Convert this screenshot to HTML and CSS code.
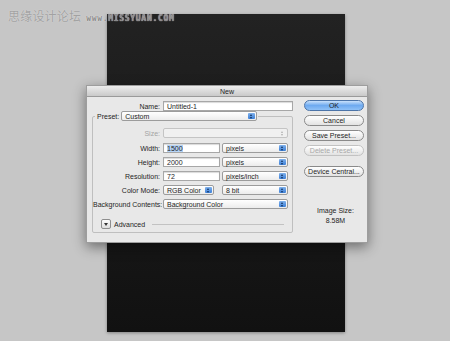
FILE: index.html
```html
<!DOCTYPE html>
<html lang="en">
<head>
    <meta charset="UTF-8">
    <title>New</title>
    <link rel="stylesheet" href="styles.css">
</head>
<body>
    <div class="stage">
        <div class="canvas"></div>

        <div class="watermark">
            <span class="wm-cn">思缘设计论坛</span>
            <span class="wm-url">www.MISSYUAN.COM</span>
        </div>

        <div class="dialog">
            <div class="titlebar">New</div>
            <div class="dialog-body">
                <div class="form">
                    <div class="row name-row">
                        <label class="lbl">Name:</label>
                        <div class="field input name-input">Untitled-1</div>
                    </div>

                    <div class="group">
                        <div class="group-head">
                            <span class="lbl-inline">Preset:</span>
                            <div class="field select preset">Custom<span class="arrows blue"></span></div>
                        </div>

                        <div class="row">
                            <label class="lbl disabled">Size:</label>
                            <div class="field select wide off"><span class="arrows grey"></span></div>
                        </div>
                        <div class="row gap-top">
                            <label class="lbl">Width:</label>
                            <div class="field input num"><span class="sel">1500</span></div>
                            <div class="field select unit">pixels<span class="arrows blue"></span></div>
                        </div>
                        <div class="row">
                            <label class="lbl">Height:</label>
                            <div class="field input num">2000</div>
                            <div class="field select unit">pixels<span class="arrows blue"></span></div>
                        </div>
                        <div class="row">
                            <label class="lbl">Resolution:</label>
                            <div class="field input num">72</div>
                            <div class="field select unit">pixels/inch<span class="arrows blue"></span></div>
                        </div>
                        <div class="row">
                            <label class="lbl">Color Mode:</label>
                            <div class="field select mode">RGB Color<span class="arrows blue"></span></div>
                            <div class="field select unit">8 bit<span class="arrows blue"></span></div>
                        </div>
                        <div class="row">
                            <label class="lbl">Background Contents:</label>
                            <div class="field select wide">Background Color<span class="arrows blue"></span></div>
                        </div>

                        <div class="advanced">
                            <span class="disclosure"></span>
                            <span>Advanced</span>
                            <span class="rule"></span>
                        </div>
                    </div>
                </div>

                <div class="side">
                    <button class="btn ok">OK</button>
                    <button class="btn">Cancel</button>
                    <button class="btn">Save Preset...</button>
                    <button class="btn off">Delete Preset...</button>
                    <button class="btn spaced">Device Central...</button>
                    <div class="size-info">
                        <div>Image Size:</div>
                        <div>8.58M</div>
                    </div>
                </div>
            </div>
        </div>
    </div>
</body>
</html>
```

FILE: styles.css
```css
* { box-sizing: border-box; }

body {
    margin: 0;
    background: #c6c6c6;
    font-family: "Liberation Sans", "Noto Sans CJK SC", sans-serif;
}

.stage {
    position: relative;
    width: 450px;
    height: 341px;
    overflow: hidden;
    padding: 14px 0 0 107px;
}

.canvas {
    width: 238px;
    height: 318px;
    background: linear-gradient(180deg, #222 0%, #1b1b1b 40%, #111 100%);
    box-shadow: 0 1px 3px rgba(0,0,0,0.35);
}

/* watermark sits over the canvas corner */
.watermark {
    position: absolute;
    left: 8px;
    top: 7px;
    display: flex;
    align-items: baseline;
    gap: 5px;
    color: #a2a2a2;
    text-shadow: 0 0 1px #e6e6e6;
}
.wm-cn {
    font-family: "Noto Sans CJK SC", sans-serif;
    font-size: 12px;
    letter-spacing: 0.2px;
}
.wm-url {
    font-family: "DejaVu Sans Mono", monospace;
    font-size: 8px;
    font-weight: bold;
    letter-spacing: 0.7px;
    color: #8a8a8a;
    text-shadow: 0 0 1px #fff;
}

.dialog {
    position: absolute;
    left: 86px;
    top: 85px;
    width: 282px;
    height: 158px;
    background: #e8e8e8;
    border: 1px solid #9d9d9d;
    box-shadow: 0 4px 12px rgba(0,0,0,0.45);
    font-size: 7px;
    color: #1e1e1e;
}

.titlebar {
    height: 11px;
    line-height: 11px;
    text-align: center;
    background: linear-gradient(#ececec, #c9c9c9);
    border-bottom: 1px solid #9a9a9a;
}

.dialog-body {
    display: flex;
    padding: 2px 0 0 5px;
}

.form { width: 206px; }

.row {
    display: flex;
    align-items: center;
    height: 14px;
    gap: 2px;
}
.name-row { margin-bottom: 3px; }

.lbl {
    width: 69px;
    text-align: right;
    padding-right: 1px;
    white-space: nowrap;
}
.lbl.disabled { color: #a3a3a3; }

.field {
    height: 10px;
    line-height: 9px;
    padding-left: 3px;
    background: #fff;
    border: 1px solid #a7a7a7;
    white-space: nowrap;
    position: relative;
}
.input { box-shadow: inset 0 1px 1px rgba(0,0,0,0.15); }
.name-input { width: 130px; }
.num { width: 57px; }
.sel { background: #b5d3f5; }

.select {
    border-radius: 2px;
    background: linear-gradient(#ffffff, #ececec);
    border-color: #9c9c9c;
}
.select.off { background: #f0f0f0; border-color: #c4c4c4; }
.unit { width: 66px; }
.wide { width: 125px; }
.mode { width: 51px; margin-right: 6px; }

.arrows {
    position: absolute;
    right: 1px;
    top: 1px;
    width: 7px;
    height: 6px;
    border-radius: 1px;
}
.arrows::before, .arrows::after {
    content: "";
    position: absolute;
    left: 2px;
    border-left: 1.5px solid transparent;
    border-right: 1.5px solid transparent;
}
.arrows::before { top: 0.5px; border-bottom: 2px solid currentColor; }
.arrows::after { bottom: 0.5px; border-top: 2px solid currentColor; }
.arrows.blue { background: linear-gradient(#7fb1ec, #3c7fd6); color: #10305e; }
.arrows.grey { color: #b0b0b0; }

.group {
    position: relative;
    margin-top: 3px;
    width: 201px;
    height: 117px;
    border: 1px solid #bfbfbf;
    border-radius: 2px;
    padding-top: 9px;
}
.group .lbl { width: 68px; }

/* legend-like header over the group border */
.group-head {
    position: absolute;
    left: 2px;
    top: -6px;
    display: flex;
    align-items: center;
    gap: 2px;
    background: #e8e8e8;
    padding: 0 1px 0 2px;
}
.preset { width: 136px; }

.gap-top { margin-top: 1px; }

.advanced {
    display: flex;
    align-items: center;
    gap: 3px;
    margin: 8px 0 0 8px;
}
.disclosure {
    width: 10px;
    height: 10px;
    border: 1px solid #8e8e8e;
    border-radius: 2px;
    background: linear-gradient(#fdfdfd, #dcdcdc);
    position: relative;
}
.disclosure::after {
    content: "";
    position: absolute;
    left: 2px;
    top: 3px;
    border-left: 2px solid transparent;
    border-right: 2px solid transparent;
    border-top: 3px solid #333;
}
.rule {
    flex: 1;
    height: 1px;
    background: #c2c2c2;
    margin: 0 8px 0 4px;
}

.side {
    width: 64px;
    margin-left: 9px;
    padding-top: 1px;
    display: flex;
    flex-direction: column;
    gap: 4px;
}

.btn {
    width: 60px;
    height: 11px;
    padding: 0;
    font-family: inherit;
    font-size: 7px;
    line-height: 9px;
    white-space: nowrap;
    color: #1e1e1e;
    border: 1px solid #8a8a8a;
    border-radius: 6px;
    background: linear-gradient(#ffffff, #e2e2e2);
}
.btn.ok {
    background: linear-gradient(#c9e1fb, #6eaaf0 50%, #8fc1f7);
    border-color: #4c74a8;
}
.btn.off { color: #a8a8a8; border-color: #c2c2c2; }
.btn.spaced { margin-top: 6px; }

.size-info {
    margin-top: 25px;
    text-align: center;
    line-height: 10px;
    color: #1e1e1e;
}
```
